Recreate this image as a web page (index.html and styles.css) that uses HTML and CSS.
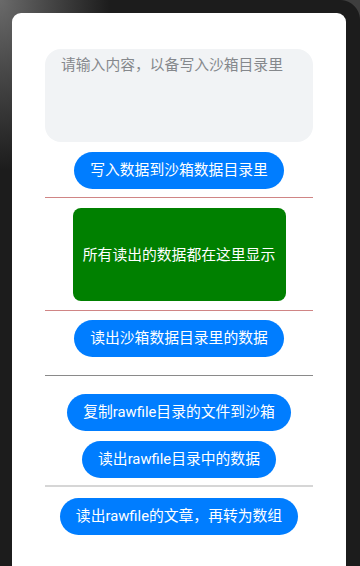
FILE: index.html
```html
<!DOCTYPE html>
<html lang="zh-CN">
<head>
<meta charset="utf-8">
<title>沙箱文件</title>
<link rel="stylesheet" href="styles.css">
</head>
<body>
<div class="panel">
  <textarea class="input" placeholder="请输入内容，以备写入沙箱目录里"></textarea>
  <button class="btn gap-8">写入数据到沙箱数据目录里</button>
  <div class="divider red gap-10"></div>
  <div class="output gap-9">所有读出的数据都在这里显示</div>
  <div class="divider red gap-9"></div>
  <button class="btn gap-18">读出沙箱数据目录里的数据</button>
  <div class="divider gray gap-18"></div>
  <button class="btn gap-10">复制rawfile目录的文件到沙箱</button>
  <button class="btn gap-7">读出rawfile目录中的数据</button>
  <div class="divider light gap-11"></div>
  <button class="btn">读出rawfile的文章，再转为数组</button>
</div>
</body>
</html>
```
FILE: styles.css
```css
html, body {
  margin: 0;
  padding: 0;
  height: 566px;
  overflow: hidden;
}

body {
  font-family: Roboto, "Noto Sans CJK SC", sans-serif;
  background:
    radial-gradient(circle at 0 100%, #1c1c1c 19.5px, #3e3e3e 20.5px) right top / 20px 20px no-repeat,
    radial-gradient(ellipse 110px 170px at 0 0, #6a6a6a 0, #4a4a4a 40%, #1c1c1c 100%) 0 0 / 100% 100% no-repeat,
    #1c1c1c;
}

.panel {
  box-sizing: border-box;
  margin: 13px 0 0 12px;
  width: 334px;
  height: 553px;
  background: #ffffff;
  border-radius: 9px 9px 0 0;
  padding-top: 36px;
  display: flex;
  flex-direction: column;
  align-items: center;
}

.input {
  box-sizing: border-box;
  width: 268px;
  height: 93px;
  margin: 0 0 10px 0;
  padding: 6px 16px;
  border: none;
  outline: none;
  resize: none;
  border-radius: 16px;
  background: #f1f3f5;
  font-family: Roboto, "Noto Sans CJK SC", sans-serif;
  font-size: 14.8px;
  line-height: 20px;
  color: #182431;
}

.input::placeholder {
  color: #85888c;
}

.btn {
  height: 37px;
  padding: 0 16px;
  border: none;
  border-radius: 19px;
  background: #007dff;
  color: #ffffff;
  font-family: Roboto, "Noto Sans CJK SC", sans-serif;
  font-size: 14.8px;
  font-weight: 400;
  line-height: 37px;
  white-space: nowrap;
}

.divider {
  width: 268px;
  height: 1px;
  flex: none;
}

.divider.red {
  background: #d08585;
}

.divider.gray {
  background: #8a8a8a;
}

.divider.light {
  height: 2px;
  background: #d6d6d6;
}

.output {
  width: 213px;
  height: 93px;
  border-radius: 8px;
  background: #008000;
  color: #ffffff;
  font-size: 14.8px;
  padding-bottom: 3px;
  box-sizing: border-box;
  display: flex;
  align-items: center;
  justify-content: center;
  white-space: nowrap;
}

.gap-7 { margin-bottom: 7px; }
.gap-8 { margin-bottom: 8px; }
.gap-9 { margin-bottom: 9px; }
.gap-10 { margin-bottom: 10px; }
.gap-11 { margin-bottom: 11px; }
.gap-18 { margin-bottom: 18px; }
```
